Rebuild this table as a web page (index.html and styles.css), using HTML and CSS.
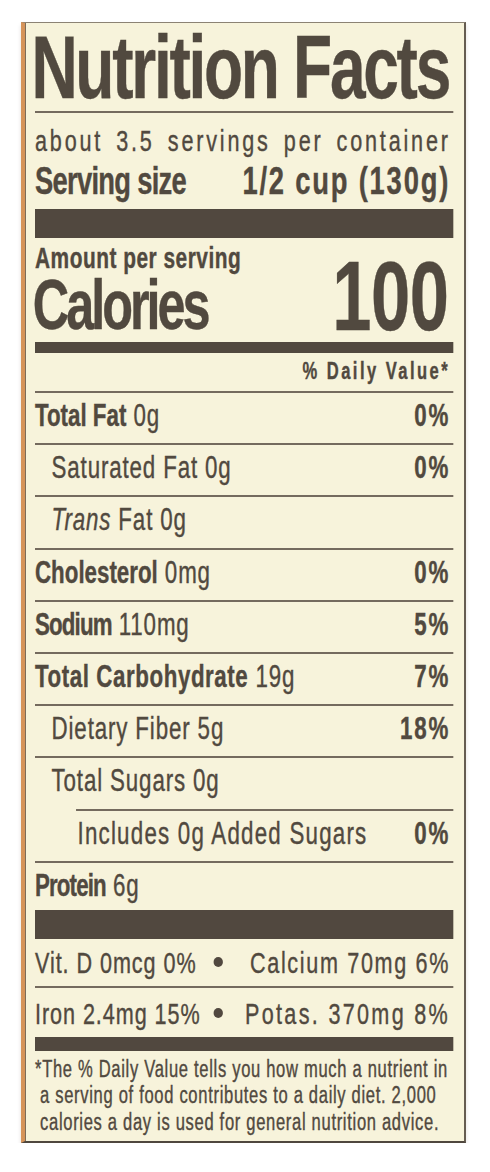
FILE: index.html
```html
<!DOCTYPE html>
<html lang="en">
<head>
    <meta charset="UTF-8">
    <meta name="viewport" content="width=device-width, initial-scale=1.0">
    <title>Nutrition Facts</title>
    <link rel="stylesheet" href="styles.css">
</head>
<body>
    <div class="label">
        <div class="facts">
            <h1 class="title">Nutrition Facts</h1>
            <div class="rule"></div>
            <p class="servings">about 3.5 servings per container</p>
            <div class="serving-size">
                <span class="ss-name">Serving size</span>
                <span class="ss-value">1/2 cup (130g)</span>
            </div>
            <div class="bar bar-thick"></div>

            <div class="calories">
                <div>
                    <p class="amount">Amount per serving</p>
                    <p class="cal-label">Calories</p>
                </div>
                <p class="cal-value">100</p>
            </div>
            <div class="bar bar-mid"></div>
            <p class="dv-head">% Daily Value*</p>

            <div class="nutrients">
                <div class="row"><span><b>Total Fat</b> 0g</span><b class="pct">0%</b></div>
                <div class="row sub"><span>Saturated Fat 0g</span><b class="pct">0%</b></div>
                <div class="row sub"><span><i>Trans</i> Fat 0g</span></div>
                <div class="row"><span><b>Cholesterol</b> 0mg</span><b class="pct">0%</b></div>
                <div class="row"><span><b class="tight">Sodium</b> 110mg</span><b class="pct">5%</b></div>
                <div class="row"><span><b class="loose">Total Carbohydrate</b> 19g</span><b class="pct">7%</b></div>
                <div class="row sub"><span>Dietary Fiber 5g</span><b class="pct">18%</b></div>
                <div class="row sub"><span>Total Sugars 0g</span></div>
                <div class="row sub2"><span>Includes 0g Added Sugars</span><b class="pct">0%</b></div>
                <div class="row last"><span><b class="tight">Protein</b> 6g</span></div>
            </div>
            <div class="bar bar-protein"></div>

            <div class="vitamins">
                <div class="vit-row">
                    <span>Vit. D 0mcg 0%</span>
                    <span class="dot"></span>
                    <span class="vit-right">Calcium 70mg 6%</span>
                </div>
                <div class="vit-row">
                    <span>Iron 2.4mg 15%</span>
                    <span class="dot"></span>
                    <span class="vit-right potas">Potas. 370mg 8%</span>
                </div>
            </div>
            <div class="bar bar-foot"></div>

            <p class="footnote">*The % Daily Value tells you how much a nutrient in<br>a serving of food contributes to a daily diet. 2,000<br>calories a day is used for general nutrition advice.</p>
        </div>
    </div>
</body>
</html>
```

FILE: styles.css
```css
* {
    margin: 0;
    padding: 0;
    box-sizing: border-box;
}

body {
    background: #fff;
    color: #51493f;
    font-family: "Liberation Sans", Arial, sans-serif;
    overflow: hidden;
}

.label {
    width: 445px;
    height: 1121px;
    margin: 22px 0 0 21px;
    padding: 0 11px 0 10px;
    background: #f7f3db;
    border-top: 1px solid #8c8374;
    border-right: 2px solid #655c51;
    border-bottom: 2px solid #4f473e;
    border-left: 4px solid #d6945a;
    box-shadow: inset 1px 0 0 #7d6c59, 0 3px 4px rgba(60, 50, 40, 0.15);
}

/* label type is condensed: lay out wide, then squeeze horizontally */
.facts {
    width: 580.5px;
    transform: scaleX(0.72);
    transform-origin: 0 0;
    -webkit-text-stroke: 0.4px currentColor;
}

.title {
    font-size: 89px;
    line-height: 88px;
    font-weight: 700;
    letter-spacing: -3.2px;
    margin-left: -5px;
    white-space: nowrap;
}

.rule {
    height: 2px;
    background: #746a5e;
}

.servings {
    margin-top: 12px;
    font-size: 30px;
    line-height: 32px;
    letter-spacing: 3.9px;
    word-spacing: 6px;
    white-space: nowrap;
}

.serving-size {
    display: flex;
    justify-content: space-between;
    margin-top: 5px;
    padding-right: 4px;
    font-size: 38px;
    line-height: 38px;
    font-weight: 700;
    white-space: nowrap;
}

.ss-name {
    letter-spacing: -1px;
}

.ss-value {
    letter-spacing: 2.5px;
}

.bar {
    background: #51483f;
}

.bar-thick {
    height: 29px;
    margin-top: 9px;
}

.calories {
    display: flex;
    justify-content: space-between;
    align-items: flex-end;
    margin-top: 6px;
    font-weight: 700;
    white-space: nowrap;
}

.amount {
    font-size: 29px;
    line-height: 28px;
    letter-spacing: 0.7px;
}

.cal-label {
    margin: 3px 0 0 -3px;
    font-size: 70px;
    line-height: 60px;
    letter-spacing: -4.2px;
}

.cal-value {
    padding-right: 6px;
    font-size: 98px;
    line-height: 77px;
    letter-spacing: -0.6px;
}

.bar-mid {
    height: 11px;
    margin-top: 7px;
}

.dv-head {
    margin-top: 6px;
    padding-right: 4px;
    font-size: 23px;
    line-height: 24px;
    font-weight: 700;
    letter-spacing: 3.4px;
    text-align: right;
}

.nutrients {
    margin-top: 8px;
}

.row {
    display: flex;
    justify-content: space-between;
    border-top: 2px solid #746a5e;
    padding: 0 4px 4.2px 0;
    font-size: 31px;
    line-height: 46px;
    letter-spacing: 1.2px;
    white-space: nowrap;
}

.row b {
    letter-spacing: 0;
}

.row b.tight {
    letter-spacing: -1.2px;
}

.row b.loose {
    letter-spacing: 0.8px;
}

.row .pct {
    letter-spacing: 2.5px;
}

.row.sub {
    padding-left: 23px;
}

.row.sub2 {
    margin-left: 57px;
    padding-left: 2px;
    letter-spacing: 1.7px;
}

.row.last {
    padding-bottom: 1px;
}

.bar-protein {
    height: 29px;
}

.vit-row {
    display: grid;
    grid-template-columns: 236px 36px 1fr;
    align-items: center;
    padding-right: 4px;
    font-size: 30px;
    line-height: 47px;
    letter-spacing: 1.3px;
    white-space: nowrap;
}

.vit-row + .vit-row {
    border-top: 2px solid #746a5e;
    padding-top: 2px;
}

.vit-right {
    text-align: right;
    letter-spacing: 2.3px;
}

.vit-right.potas {
    letter-spacing: 3.2px;
}

.dot {
    justify-self: center;
    width: 13px;
    height: 10px;
    border-radius: 50%;
    background: #51483f;
}

.bar-foot {
    height: 14px;
}

.footnote {
    margin-top: 5px;
    padding-left: 7px;
    text-indent: -7px;
    font-size: 23px;
    line-height: 26.7px;
    letter-spacing: 0.95px;
    white-space: nowrap;
}
```
